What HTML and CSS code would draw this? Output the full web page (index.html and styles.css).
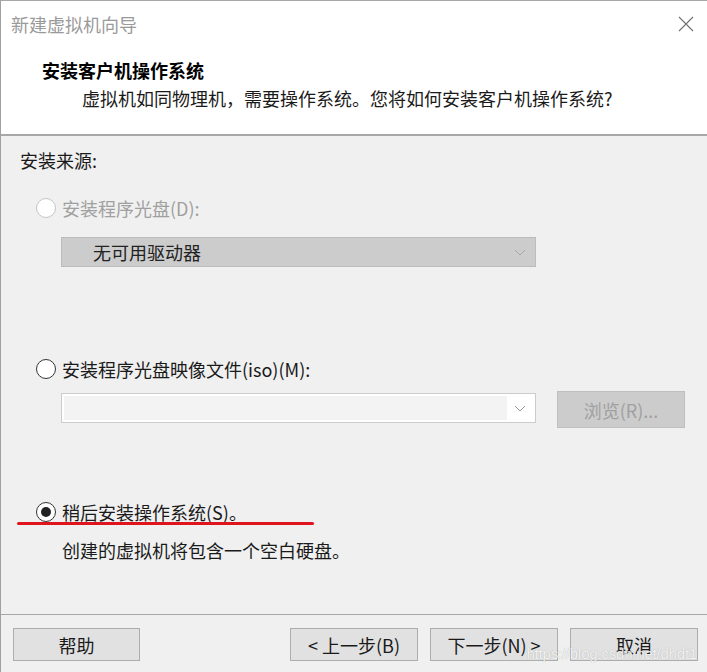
FILE: index.html
```html
<!DOCTYPE html>
<html lang="zh-CN">
<head>
<meta charset="utf-8">
<title>新建虚拟机向导</title>
<link rel="stylesheet" href="styles.css">
</head>
<body>
<div class="window">
  <div class="header">
    <div class="titlebar">
      <span class="wintitle">新建虚拟机向导</span>
      <span class="close">
        <svg width="16" height="16" viewBox="0 0 16 16"><path d="M1 1 L15 15 M15 1 L1 15" stroke="#707070" stroke-width="1.1" fill="none"/></svg>
      </span>
    </div>
    <div class="h-title">安装客户机操作系统</div>
    <div class="h-sub">虚拟机如同物理机，需要操作系统。您将如何安装客户机操作系统?</div>
  </div>
  <div class="content">
    <div class="label">安装来源:</div>
    <div class="radio-row r1 disabled">
      <span class="radio"></span><span>安装程序光盘(D):</span>
    </div>
    <div class="combo combo-disabled">
      <span class="combo-text">无可用驱动器</span>
      <svg class="chev" width="12" height="7" viewBox="0 0 12 7"><path d="M1 1 L6 6 L11 1" stroke="#a8a8a8" stroke-width="1" fill="none"/></svg>
    </div>
    <div class="radio-row r2">
      <span class="radio"></span><span>安装程序光盘映像文件(iso)(M):</span>
    </div>
    <div class="iso-row">
      <div class="combo combo-iso">
        <div class="combo-field"></div>
        <svg class="chev" width="12" height="7" viewBox="0 0 12 7"><path d="M1 1 L6 6 L11 1" stroke="#9a9a9a" stroke-width="1" fill="none"/></svg>
      </div>
      <div class="browse">浏览(R)...</div>
    </div>
    <div class="radio-row r3">
      <span class="radio checked"></span><span>稍后安装操作系统(S)。</span>
      <span class="redline"></span>
    </div>
    <div class="desc">创建的虚拟机将包含一个空白硬盘。</div>
  </div>
  <div class="footer">
    <div class="btn">帮助</div>
    <div class="btn-group">
      <div class="btn">&lt; 上一步(B)</div>
      <div class="btn">下一步(N) &gt;</div>
      <div class="btn">取消</div>
    </div>
    <span class="watermark">https://blog.csdn.net/dhdt1</span>
  </div>
</div>
</body>
</html>
```
FILE: styles.css
```css
html, body {
  margin: 0;
  padding: 0;
}
body {
  width: 707px;
  height: 672px;
  overflow: hidden;
  background: #f0f0f0;
  font-family: "Noto Sans CJK SC", "Noto Sans", sans-serif;
  font-size: 18px;
  color: #1a1a1a;
}
.window {
  box-sizing: border-box;
  width: 707px;
  height: 672px;
  border-top: 1px solid #a8a8a8;
  border-left: 1px solid #a0a0a0;
  display: flex;
  flex-direction: column;
  background: #f0f0f0;
}
.header {
  background: #ffffff;
  height: 133px;
  border-bottom: 2px solid #a8a8a8;
  box-sizing: content-box;
}
.titlebar {
  height: 46px;
  display: flex;
  align-items: center;
  justify-content: space-between;
  padding-left: 10px;
  padding-right: 12px;
}
.wintitle {
  color: #9a9a9a;
  line-height: 46px;
}
.close {
  display: flex;
  width: 16px;
  height: 16px;
  margin-right: 1px;
}
.h-title {
  margin-top: 10px;
  padding-left: 41px;
  line-height: 26px;
  font-weight: 700;
  color: #000;
}
.h-sub {
  margin-top: 2px;
  padding-left: 81px;
  line-height: 26px;
  color: #1a1a1a;
}
.content {
  flex: 1;
  padding-left: 19px;
  position: relative;
}
.label {
  margin-top: 11px;
  line-height: 26px;
}
.radio-row {
  display: flex;
  align-items: center;
  height: 26px;
  line-height: 26px;
  padding-left: 16px;
  position: relative;
}
.radio-row .radio {
  box-sizing: border-box;
  width: 20px;
  height: 20px;
  border-radius: 50%;
  border: 1px solid #333;
  background: #fff;
  margin-right: 6px;
  position: relative;
}
.disabled {
  color: #a0a0a0;
}
.disabled .radio {
  border-color: #c4c4c4;
}
.radio.checked::after {
  content: "";
  position: absolute;
  left: 4px;
  top: 4px;
  width: 10px;
  height: 10px;
  border-radius: 50%;
  background: #222;
}
.r1 { margin-top: 22px; }
.r2 { margin-top: 89px; }
.r3 { margin-top: 71px; }
.combo {
  box-sizing: border-box;
  display: flex;
  align-items: center;
  position: relative;
}
.combo-disabled {
  margin-top: 16px;
  margin-left: 41px;
  width: 475px;
  height: 30px;
  background: #cccccc;
  border: 1px solid #bcbcbc;
}
.combo-text {
  padding-left: 31px;
  line-height: 28px;
  color: #222;
  flex: 1;
}
.chev {
  margin-right: 9px;
}
.iso-row {
  margin-top: 9px;
  margin-left: 41px;
  display: flex;
  align-items: flex-start;
}
.combo-iso {
  margin-top: 2px;
  width: 475px;
  height: 30px;
  background: #ffffff;
  border: 1px solid #cccccc;
}
.combo-field {
  flex: 1;
  height: 24px;
  margin: 0 28px 0 2px;
  background: #f3f3f3;
  align-self: center;
}
.combo-iso .chev {
  position: absolute;
  right: 0;
  top: 11px;
}
.browse {
  box-sizing: border-box;
  margin-left: 21px;
  width: 128px;
  height: 37px;
  background: #cccccc;
  border: 1px solid #bfbfbf;
  color: #a0a0a0;
  display: flex;
  align-items: center;
  justify-content: center;
}
.redline {
  position: absolute;
  left: -3px;
  top: 23px;
  width: 297px;
  height: 3px;
  border-radius: 2px;
  background: #e0141c;
}
.desc {
  margin-top: 12px;
  padding-left: 42px;
  line-height: 26px;
}
.footer {
  box-sizing: border-box;
  height: 58px;
  border-top: 1px solid #a8a8a8;
  display: flex;
  justify-content: space-between;
  align-items: flex-start;
  padding: 13px 9px 0 12px;
  position: relative;
}
.btn-group {
  display: flex;
  gap: 12px;
}
.btn {
  box-sizing: border-box;
  width: 127px;
  height: 33px;
  background: #e1e1e1;
  border: 1px solid #adadad;
  display: flex;
  align-items: center;
  justify-content: center;
  color: #1a1a1a;
}
.btn-group .btn {
  width: 128px;
}
.watermark {
  position: absolute;
  right: 10px;
  top: 30px;
  font-family: "Liberation Sans", Arial, sans-serif;
  font-size: 15px;
  letter-spacing: -0.2px;
  color: rgba(255, 255, 255, 0.85);
  text-shadow: 0 0 1px rgba(120, 120, 120, 0.6);
}
```
